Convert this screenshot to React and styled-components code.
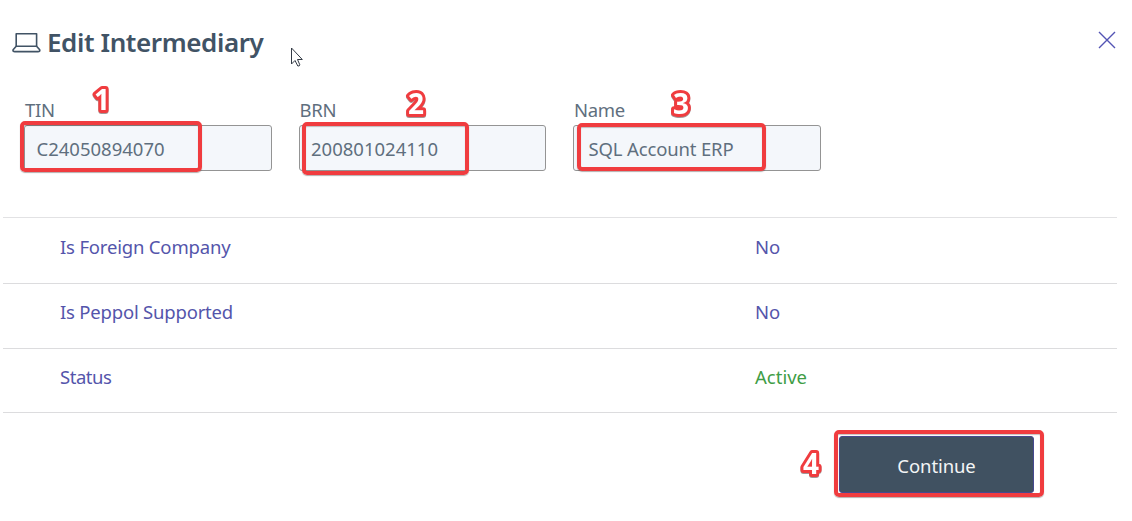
import React from "react";
import styled, { createGlobalStyle } from "styled-components";

const GlobalStyle = createGlobalStyle`
  * { box-sizing: border-box; }
  body {
    margin: 0;
    background: #fff;
    color: #5f6f7e;
    font-family: "Noto Sans", "Open Sans", sans-serif;
    font-size: 18.5px;
  }
`;

const Dialog = styled.main`
  position: relative;
  width: 1132px;
  height: 521px;
  overflow: hidden;
  display: flex;
  flex-direction: column;
  background: #fff;
`;

const Header = styled.header`
  height: 86px;
  padding: 0 16px 0 12px;
  display: flex;
  align-items: center;
`;

const LaptopIcon = styled.svg`
  width: 29px;
  height: 21px;
  margin: -1px 6px 0 0;
`;

const Title = styled.h1`
  flex: 1;
  margin: -2px 0 0;
  color: #415365;
  font-size: 26px;
  font-weight: 600;
  line-height: 36px;
  letter-spacing: -0.4px;
  white-space: nowrap;
`;

const CloseButton = styled.button`
  width: 18px;
  height: 18px;
  margin-top: -6px;
  padding: 0;
  border: 0;
  background: none;
  display: flex;
`;

const Fields = styled.section`
  height: 131px;
  padding: 10px 0 0 24px;
  display: grid;
  grid-template-columns: repeat(3, 247.5px);
  column-gap: 27px;
  align-content: start;
`;

const Field = styled.label`
  position: relative;
  display: flex;
  flex-direction: column;
`;

const Label = styled.span`
  height: 29px;
  padding-left: 1px;
  line-height: 27px;
  letter-spacing: -0.3px;
  white-space: nowrap;
`;

const ValueBox = styled.span`
  height: 46px;
  padding-left: ${(p) => p.$inset}px;
  border: 1.5px solid #949494;
  border-radius: 3px;
  background: #f4f7fb;
  line-height: 45px;
  white-space: nowrap;
  letter-spacing: ${(p) => p.$tracking || 0}px;
`;

const Highlight = styled.span`
  position: absolute;
  left: ${(p) => p.$x}px;
  top: ${(p) => p.$y}px;
  width: ${(p) => p.$w}px;
  height: ${(p) => p.$h}px;
  border: 4px solid #f03c3f;
  border-radius: 5px;
  box-shadow: 0 1px 1px rgba(70, 50, 50, 0.4), inset 0 1px 1px rgba(70, 50, 50, 0.3);
`;

const StepMark = styled.svg`
  position: absolute;
  left: ${(p) => p.$x}px;
  top: ${(p) => p.$y}px;
  width: 30px;
  height: 46px;
  filter: drop-shadow(0 1px 0.6px rgba(70, 50, 50, 0.5));
  pointer-events: none;

  text {
    fill: #fff;
    stroke: #f03c3f;
    stroke-width: 6px;
    stroke-linejoin: round;
    paint-order: stroke fill;
    font-family: "Open Sans", "Noto Sans", sans-serif;
    font-size: 28px;
    font-weight: 700;
    text-anchor: middle;
  }
`;

const Details = styled.section`
  margin: 0 15px 0 3px;
  border-top: 1.6px solid #e2e2e4;
`;

const DetailRow = styled.div`
  height: ${(p) => p.$height}px;
  padding: 0 0 ${(p) => p.$below}px 57px;
  border-bottom: 1px solid #dcdcde;
  display: grid;
  grid-template-columns: 695px 1fr;
  align-items: center;
  color: #5455ab;
`;

const DetailText = styled.span`
  white-space: nowrap;
  letter-spacing: ${(p) => p.$tracking || 0}px;
  color: ${(p) => (p.$active ? "#409d46" : "inherit")};
`;

const Footer = styled.footer`
  position: relative;
  padding: 23px 98px 0 0;
  display: flex;
  justify-content: flex-end;
`;

const ContinueButton = styled.button`
  width: 195px;
  height: 57px;
  padding: 2px 0 0;
  border: 1px solid #46498f;
  border-radius: 3px;
  background: #405161;
  color: #f3f5f6;
  font: inherit;
  letter-spacing: -0.1px;
`;

const Cursor = styled.svg`
  position: absolute;
  left: 290px;
  top: 47px;
  width: 14px;
  height: 21px;
`;

function Step({ n, x, y }) {
  return (
    <StepMark $x={x} $y={y} viewBox="0 0 30 46">
      <text x="15" y="33">{n}</text>
    </StepMark>
  );
}

const fields = [
  { label: "TIN", value: "C24050894070", inset: 11.5, step: { n: 1, x: 63, y: -19 }, box: { x: -4, y: 25, w: 182, h: 51 } },
  { label: "BRN", value: "200801024110", inset: 11.5, step: { n: 2, x: 102, y: -15 }, box: { x: 3.5, y: 26, w: 167, h: 53 } },
  { label: "Name", value: "SQL Account ERP", inset: 14.5, tracking: -0.15, step: { n: 3, x: 93, y: -15 }, box: { x: 4, y: 27, w: 189, h: 48 } },
];

const rows = [
  { label: "Is Foreign Company", value: "No", height: 65.5, below: 7, tracking: -0.18 },
  { label: "Is Peppol Supported", value: "No", height: 65, below: 9, tracking: -0.2 },
  { label: "Status", value: "Active", height: 64.5, below: 8, tracking: -0.45, active: true },
];

export default function App() {
  return (
    <>
      <GlobalStyle />
      <Dialog>
        <Header>
          <LaptopIcon viewBox="0 0 29 21" fill="none" stroke="#415365" strokeWidth="1.6" strokeLinejoin="round">
            <path d="M4.2 14.2V1.7H24.6V14.2" />
            <path d="M4.2 14.2H24.6L27.7 17.8Q28.2 19.6 26 19.6H2.8Q.6 19.6 1.1 17.8Z" />
          </LaptopIcon>
          <Title>Edit Intermediary</Title>
          <CloseButton aria-label="Close">
            <svg width="18" height="18" viewBox="0 0 18 18" stroke="#5354b4" strokeWidth="1.4">
              <path d="M1 1L17 17M17 1L1 17" />
            </svg>
          </CloseButton>
        </Header>
        <Fields>
          {fields.map((f) => (
            <Field key={f.label}>
              <Label>{f.label}</Label>
              <ValueBox $inset={f.inset} $tracking={f.tracking}>{f.value}</ValueBox>
              <Highlight $x={f.box.x} $y={f.box.y} $w={f.box.w} $h={f.box.h} />
              <Step n={f.step.n} x={f.step.x} y={f.step.y} />
            </Field>
          ))}
        </Fields>
        <Details>
          {rows.map((r) => (
            <DetailRow key={r.label} $height={r.height} $below={r.below}>
              <DetailText $tracking={r.tracking}>{r.label}</DetailText>
              <DetailText $active={r.active}>{r.value}</DetailText>
            </DetailRow>
          ))}
        </Details>
        <Footer>
          <ContinueButton>Continue</ContinueButton>
          <Highlight $x={834} $y={17} $w={209.5} $h={67} />
          <Step n={4} x={796} y={28} />
        </Footer>
        <Cursor viewBox="0 0 14 21" fill="#fff" stroke="#333a45" strokeWidth="1">
          <path d="M1.5 1V17L5 13.5L7.8 19Q9.5 19.5 9.8 17.8L7.5 12.5H12.3Z" />
        </Cursor>
      </Dialog>
    </>
  );
}
